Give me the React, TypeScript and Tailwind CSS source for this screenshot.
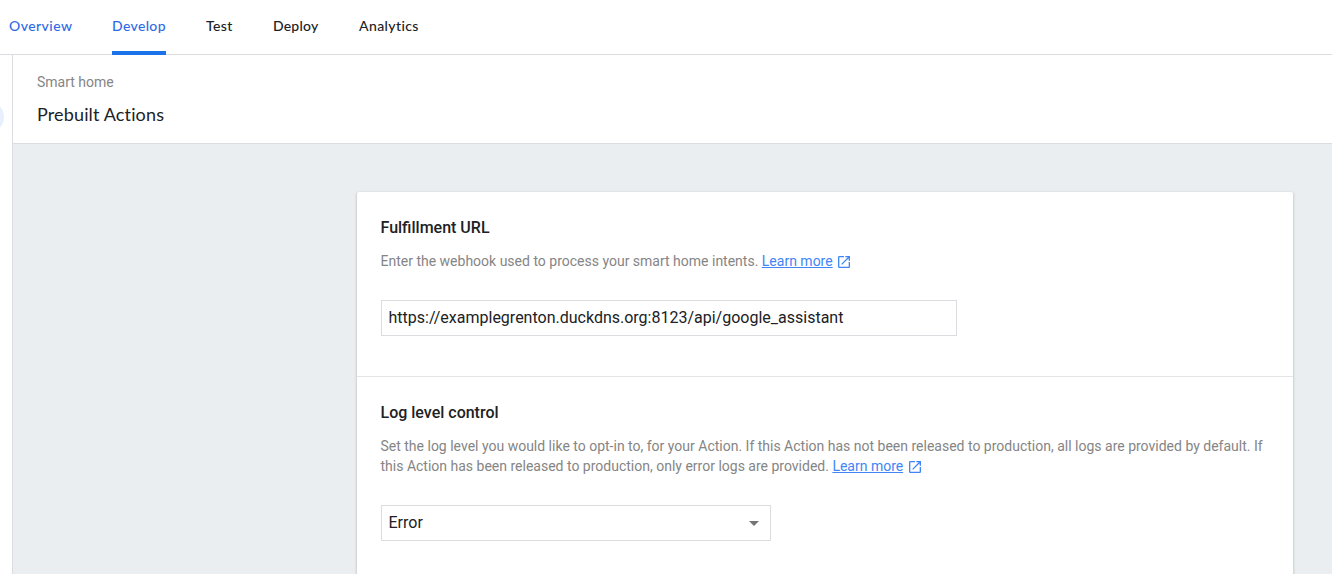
import { MdOpenInNew, MdArrowDropDown } from "react-icons/md";

function LearnMore() {
  return (
    <a className="text-[#4285f4]">
      <span className="underline">Learn more</span>
      <MdOpenInNew className="ml-[3.5px] inline-block size-4 align-[-4px]" />
    </a>
  );
}

function Tab({ label, className }: { label: string; className: string }) {
  return <div className={`h-[55px] pt-4 leading-5 whitespace-nowrap ${className}`}>{label}</div>;
}

export default function App() {
  return (
    <div className="flex h-[574px] w-[1332px] flex-col overflow-hidden bg-white font-['Roboto',sans-serif] text-[#202124]">
      <nav className="flex h-[55px] shrink-0 border-b border-[#dadce0] pl-[9px] font-['Lato',sans-serif] text-sm font-medium">
        <Tab label="Overview" className="w-[103px] tracking-[0.45px] text-[#2f6be6]" />
        <Tab label="Develop" className="mr-10 w-[54px] border-b-4 border-[#1a73e8] tracking-[0.35px] text-[#2f6be6]" />
        <Tab label="Test" className="w-[67px] tracking-[0.4px]" />
        <Tab label="Deploy" className="w-[86px] tracking-[0.2px]" />
        <Tab label="Analytics" className="w-[70px] tracking-[0.4px]" />
      </nav>
      <div className="flex min-h-0 flex-1">
        <div className="flex w-[13px] shrink-0 items-start border-r border-[#dadce0]">
          <div className="mt-[46px] flex w-1 justify-end overflow-hidden">
            <div className="size-8 shrink-0 rounded-full bg-[#e8f0fe]" />
          </div>
        </div>
        <main className="flex min-w-0 flex-1 flex-col">
          <header className="h-[89px] shrink-0 border-b border-[#dadce0] pl-6 pt-[17px]">
            <div className="text-sm leading-5 text-[#858585]">Smart home</div>
            <h1 className="mt-[10px] font-['Lato',sans-serif] text-lg leading-6 tracking-[0.14px]">Prebuilt Actions</h1>
          </header>
          <div className="min-h-0 flex-1 overflow-hidden bg-[#eaeef1] pl-[343.5px] pt-12">
            <div className="h-[500px] w-[936px] rounded-xs bg-white shadow-[0_1px_2px_0_rgba(60,64,67,0.3),0_1px_3px_1px_rgba(60,64,67,0.08)]">
              <section className="h-[185px] border-b border-[#e4e5e7] px-6 pt-6">
                <h2 className="text-base font-medium leading-6">Fulfillment URL</h2>
                <p className="mt-[11px] text-sm leading-5 text-[#858585]">Enter the webhook used to process your smart home intents. <LearnMore /></p>
                <div className="mt-[29px] h-9 w-[576px] border border-[#dadce0] pl-[7px] leading-[34px]">https://examplegrenton.duckdns.org:8123/api/google_assistant</div>
              </section>
              <section className="px-6 pt-6">
                <h2 className="text-base font-medium leading-6">Log level control</h2>
                <p className="mt-[11px] text-sm leading-5 text-[#858585]">
                  Set the log level you would like to opt-in to, for your Action. If this Action has not been released to production, all logs are provided by default. If<br />
                  this Action has been released to production, only error logs are provided. <LearnMore />
                </p>
                <div className="mt-[29px] flex h-9 w-[390px] items-center justify-between border border-[#dadce0] pl-[7px] pr-[3.5px]">
                  Error
                  <MdArrowDropDown className="size-6 text-[#757575]" />
                </div>
              </section>
            </div>
          </div>
        </main>
      </div>
    </div>
  );
}
